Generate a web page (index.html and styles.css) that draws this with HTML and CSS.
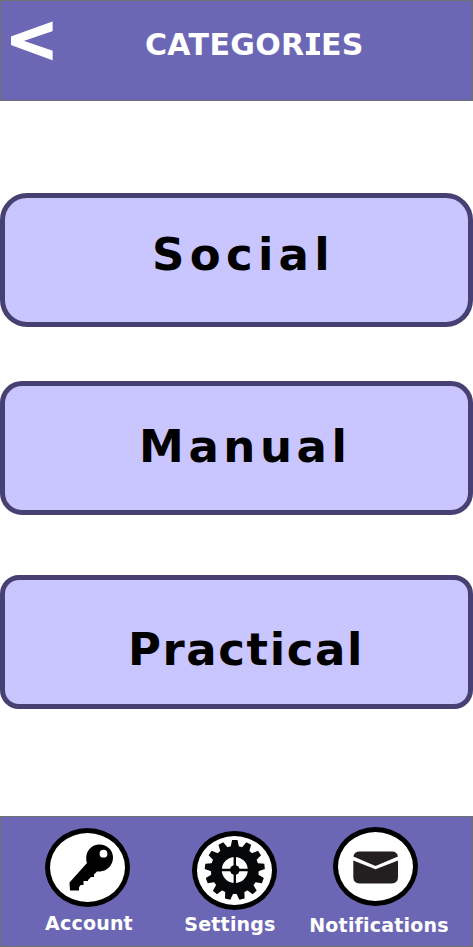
FILE: index.html
```html
<!DOCTYPE html>
<html lang="en">
<head>
<meta charset="utf-8">
<title>Categories</title>
<link rel="stylesheet" href="styles.css">
</head>
<body>
<header class="header">
  <a class="back">&lt;</a>
  <h1 class="title">CATEGOR<span class="serif-i">I</span>ES</h1>
</header>
<main class="categories">
  <a class="card social">Social</a>
  <a class="card manual">Manual</a>
  <a class="card practical">Practical</a>
</main>
<nav class="footer">
  <a class="item account">
    <span class="circle">
      <svg width="75" height="69" viewBox="50 833 75 69">
        <path fill="#000" fill-rule="evenodd" d="M99.500 844.500C107 844.500 113 850 113 857.500C113 865 107.500 871 100 871.500L97 871.500L94 874.500V877H91L88 880V881H83.500V885H80.500L79 887.500V890.500H70L69.500 882.500L87 863C84 853 90.500 844.500 99.500 844.500ZM103.500 849.800A3.900 3.900 0 1 0 103.500 857.600A3.900 3.900 0 1 0 103.500 849.800Z"/>
      </svg>
    </span>
    <span class="label">Account</span>
  </a>
  <a class="item settings">
    <span class="circle">
      <svg width="75" height="69" viewBox="-37.800 -34 75 69">
        <defs><path id="tooth" d="M-4.600-21L-2.700-30H2.700L4.600-21Z"/></defs>
        <g fill="#050709">
          <circle r="18.500" fill="none" stroke="#050709" stroke-width="11"/>
          <use href="#tooth"/>
          <use href="#tooth" transform="rotate(27.690)"/>
          <use href="#tooth" transform="rotate(55.380)"/>
          <use href="#tooth" transform="rotate(83.080)"/>
          <use href="#tooth" transform="rotate(110.770)"/>
          <use href="#tooth" transform="rotate(138.460)"/>
          <use href="#tooth" transform="rotate(166.150)"/>
          <use href="#tooth" transform="rotate(193.850)"/>
          <use href="#tooth" transform="rotate(221.540)"/>
          <use href="#tooth" transform="rotate(249.230)"/>
          <use href="#tooth" transform="rotate(276.920)"/>
          <use href="#tooth" transform="rotate(304.620)"/>
          <use href="#tooth" transform="rotate(332.310)"/>
          <circle r="4.800"/>
          <path d="M-1.200-14H1.200V14H-1.200ZM-14-1.200H14V1.200H-14Z"/>
        </g>
      </svg>
    </span>
    <span class="label">Settings</span>
  </a>
  <a class="item notifications">
    <span class="circle">
      <svg width="75" height="69" viewBox="338 832 75 69">
        <path fill="#231f20" d="M353.300 856.500Q354.500 851.400 359.500 851.400H392Q397 851.400 398 856.500L375.500 866ZM353.300 860.500L375.500 869.200L398 860.500V877Q398 883.400 391.600 883.400H359.700Q353.300 883.400 353.300 877Z"/>
      </svg>
    </span>
    <span class="label">Notifications</span>
  </a>
</nav>
</body>
</html>
```

FILE: styles.css
```css
* { box-sizing: border-box; }

body {
  margin: 0;
  height: 947px;
  display: flex;
  flex-direction: column;
  overflow: hidden;
  background: #fff;
  font-family: Verdana, "DejaVu Sans", sans-serif;
  font-weight: bold;
  font-variant-ligatures: none;
}

.header {
  display: flex;
  align-items: flex-start;
  height: 101px;
  background: #6c67b5;
  border: 1px solid #707070;
  color: #fff;
}

.back {
  width: 139px;
  padding: 6px 0 0 4px;
  font-size: 64px;
  line-height: 64px;
  -webkit-text-stroke: 1.5px #fff;
}

.title {
  margin: 0;
  padding: 29px 0 0 5px;
  font-size: 30px;
  line-height: 30px;
  letter-spacing: 0.35px;
  white-space: nowrap;
}

.serif-i {
  position: relative;
  display: inline-block;
  width: 16.4px;
  text-align: center;
}

/* Crossbars of the capital I */
.serif-i::before,
.serif-i::after {
  content: "";
  position: absolute;
  left: 1px;
  width: 14px;
  height: 4px;
  background: #fff;
}

.serif-i::before { top: 3px; }
.serif-i::after { top: 21px; }

.categories {
  display: flex;
  flex-direction: column;
  flex: 1;
  padding-top: 92px;
}

.card {
  height: 134px;
  border: 5px solid #474073;
  background: #c8c5ff;
  color: #000;
  font-size: 45px;
  line-height: 45px;
}

.social {
  margin-bottom: 54px;
  padding: 34px 0 0 147px;
  border-radius: 27px;
  letter-spacing: 5.3px;
}

.manual {
  margin-bottom: 60px;
  padding: 38px 0 0 134px;
  border-radius: 22px;
  letter-spacing: 4.6px;
}

.practical {
  padding: 47px 0 0 123px;
  border-radius: 19px;
  letter-spacing: 1.6px;
}

.footer {
  display: flex;
  align-items: flex-start;
  height: 131px;
  padding-left: 18px;
  border: 1px solid #707070;
  background: #6c67b5;
  color: #fff;
}

.item {
  display: flex;
  flex-direction: column;
  align-items: center;
}

.account { width: 137px; padding-top: 11px; }
.settings { width: 156px; padding-top: 14px; }
.notifications { width: 127px; padding-top: 10px; }

.circle {
  width: 85px;
  height: 79px;
  border: 5px solid #000;
  border-radius: 50%;
  background: #fff;
}

.circle svg { display: block; }

.label {
  font-size: 19px;
  line-height: 19px;
  letter-spacing: 0.2px;
  white-space: nowrap;
}

.account .label { margin: 7px 0 0 3px; }
.settings .label { margin: 5px 8px 0 0; }
.notifications .label { margin: 10px 0 0 7px; }
```
